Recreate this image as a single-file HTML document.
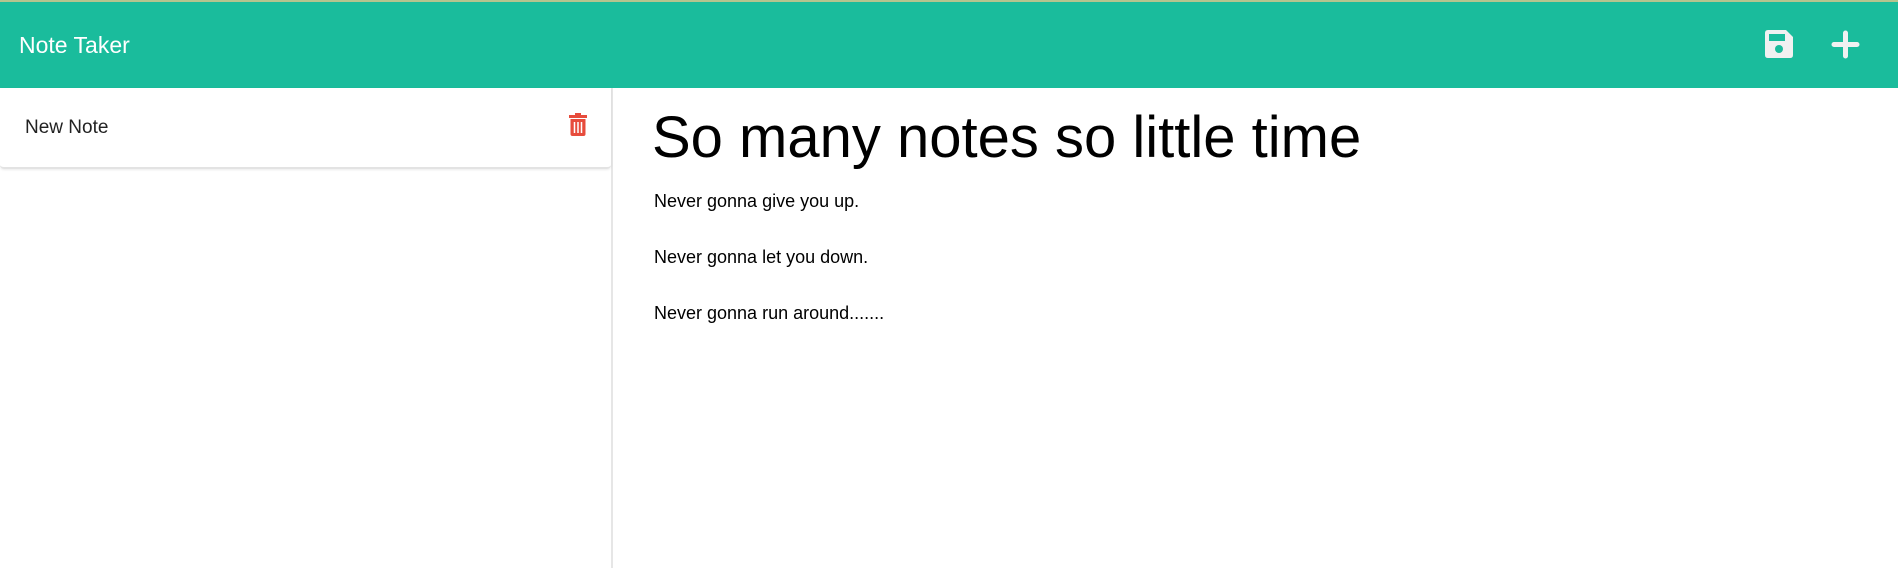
<!DOCTYPE html>
<html><head><style>
body{margin:0;width:1898px;height:568px;overflow:hidden;background:#fff;font-family:"Liberation Sans",sans-serif;}
.nav{position:absolute;left:0;top:0;width:1898px;height:88px;background:#1abc9c;border-top:2px solid #b5c48e;box-sizing:border-box;}
.title{position:absolute;left:19px;top:30px;color:#fff;font-size:23px;}
.left{position:absolute;left:0;top:88px;width:611px;height:480px;border-right:2px solid #e6e6e6;}
.item{position:absolute;left:0;top:0;width:611px;height:79px;border-bottom:2px solid #e3e3e3;border-radius:0 0 4px 4px;box-shadow:0 1px 2px rgba(0,0,0,.08);}
.item span{position:absolute;left:25px;top:29px;font-size:19px;color:#222;}
h1{position:absolute;left:652px;top:104px;margin:0;font-weight:normal;font-size:58px;color:#000;letter-spacing:0px;}
p{position:absolute;left:654px;margin:0;font-size:18px;color:#000;}
</style></head><body>
<div class="nav"><div class="title">Note Taker</div>
<svg style="position:absolute;left:1765px;top:28px" width="28" height="28" viewBox="0 0 28 28"><path fill="#f1f1f1" d="M3 0H21L28 7V25Q28 28 25 28H3Q0 28 0 25V3Q0 0 3 0Z"/><rect x="4" y="4" width="16" height="7" fill="#1abc9c"/><circle cx="14" cy="19" r="4" fill="#1abc9c"/></svg>
<svg style="position:absolute;left:1831px;top:28px" width="29" height="29" viewBox="0 0 29 29"><path d="M14.5 3V26M3 14.5H26" stroke="#f1f1f1" stroke-width="5" stroke-linecap="round"/></svg>
</div>
<div class="left"><div class="item"><span>New Note</span>
<svg style="position:absolute;left:569px;top:25px" width="18" height="23" viewBox="0 0 18 23"><rect x="0" y="2" width="18" height="3" fill="#e74c3c"/><rect x="6" y="0" width="6" height="3" fill="#e74c3c"/><path d="M1.5 6H16.5V21Q16.5 23 14.5 23H3.5Q1.5 23 1.5 21Z" fill="#e74c3c"/><path d="M5.5 9V20M9 9V20M12.5 9V20" stroke="#fff" stroke-width="1.5"/></svg>
</div></div>
<h1>So many notes so little time</h1>
<p style="top:191px">Never gonna give you up.</p>
<p style="top:247px">Never gonna let you down.</p>
<p style="top:303px">Never gonna run around.......</p>
</body></html>
